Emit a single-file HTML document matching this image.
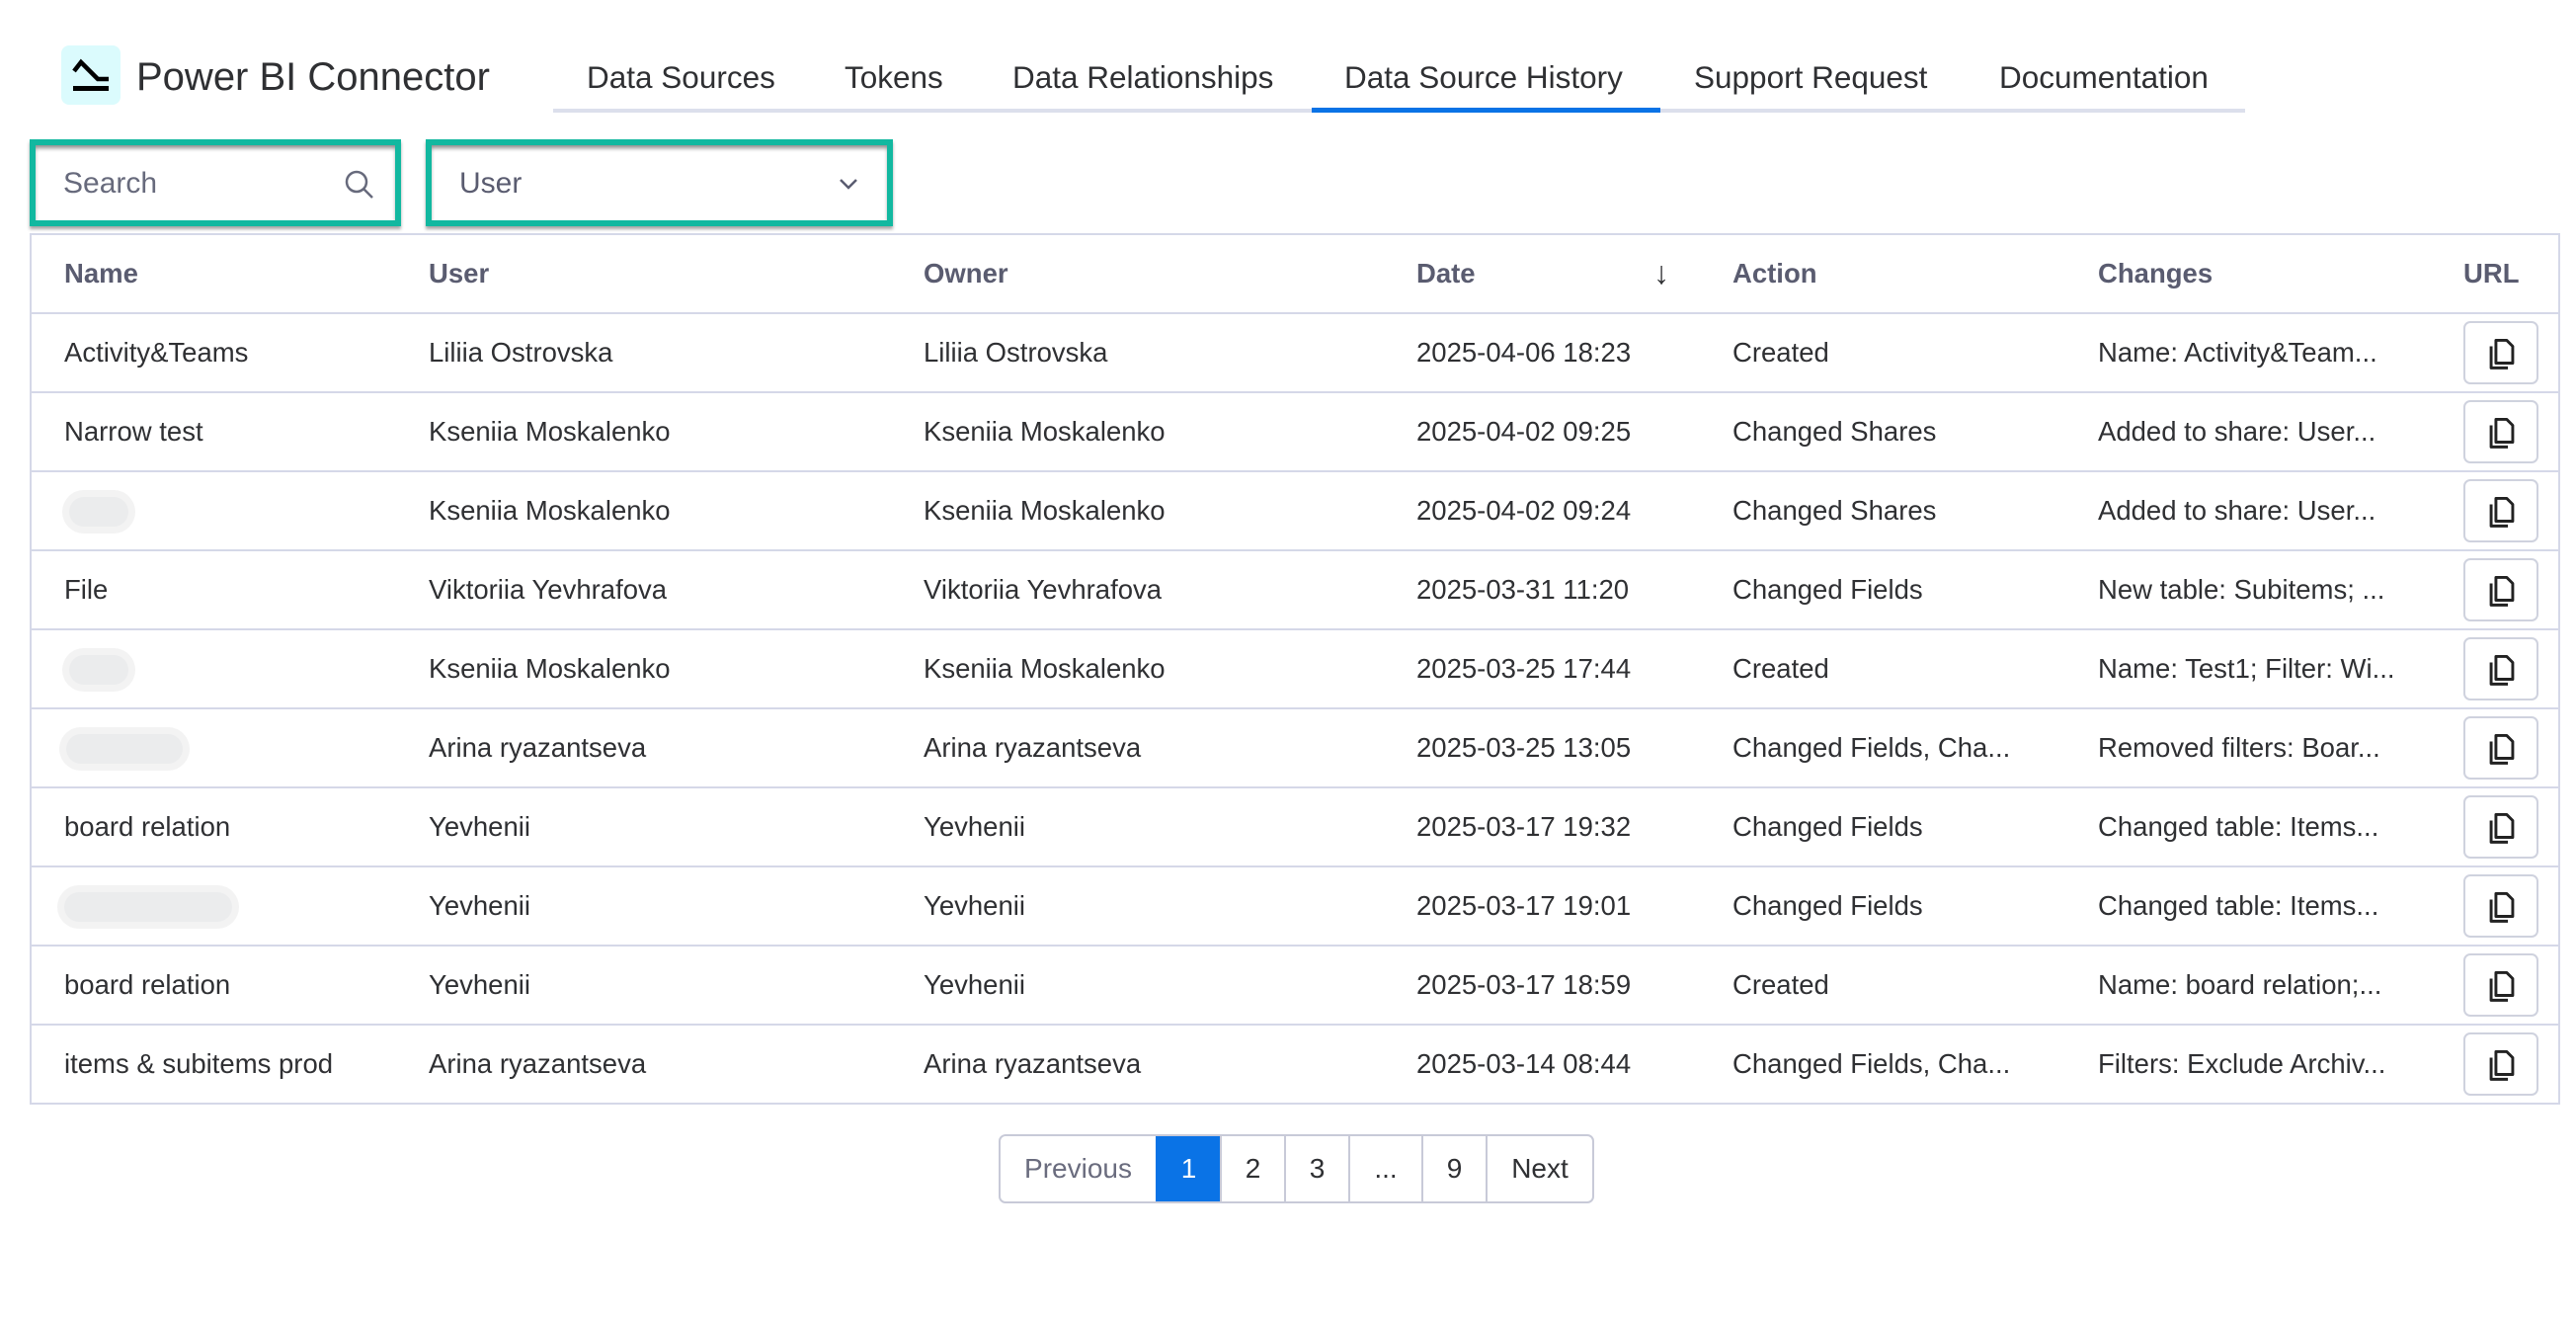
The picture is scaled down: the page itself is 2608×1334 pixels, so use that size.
<!DOCTYPE html>
<html><head><meta charset="utf-8"><style>
*{box-sizing:border-box;margin:0;padding:0}
body{width:2608px;height:1334px;background:#fff;font-family:"Liberation Sans",Arial,sans-serif;position:relative;overflow:hidden;color:#2f3033}
.abs{position:absolute}
.logo{left:62px;top:46px;width:60px;height:60px;background:#dbfbfd;border-radius:8px}
.title{left:138px;top:56px;font-size:40px;color:#2f3033;white-space:nowrap}
.tab{top:60px;font-size:31.5px;color:#2f3033;white-space:nowrap}
.tabline{left:560px;top:110px;width:1713px;height:4px;background:#dcdfec}
.tabactive{left:1328px;top:109px;width:353px;height:5px;background:#0a73e6}
.box{border:6px solid #12b8a0;box-shadow:inset 0 4px 4px -1px rgba(0,0,0,.45),0 3px 3px rgba(0,0,0,.35);background:#fff}
.ph{font-size:30px;color:#676a7c}
table{position:absolute;left:30px;top:236px;width:2562px;border-collapse:collapse;border:2px solid #d5d8e8;border-radius:6px}
td,th{height:80px;border-bottom:2px solid #d5d8e8;font-size:27.5px;text-align:left;padding:0;white-space:nowrap;vertical-align:middle}
th{color:#5a5c70;font-weight:bold;height:80px}
tr:last-child td{border-bottom:none}
.c1{padding-left:33px;width:403px}.c2{width:501px}.c3{width:499px}.c4{width:320px}.c5{width:370px}.c6{width:370px}
.cp{display:block;width:76px;height:64px;border:2px solid #cfd2de;border-radius:7px;margin-left:0;position:relative}
.cp svg{position:absolute;left:20px;top:13px}
.blur{display:inline-block;height:30px;background:#ebeced;border-radius:15px;box-shadow:0 0 0 7px #f3f3f3;vertical-align:middle}
.pag{position:absolute;left:1011px;top:1148px;height:70px;display:flex;border:2px solid #c8cad8;border-radius:7px;overflow:hidden}
.pag div{height:100%;display:flex;align-items:center;justify-content:center;font-size:28px;border-left:2px solid #c8cad8;color:#2f3033}
.pag div:first-child{border-left:none;color:#6a6c7e}
</style></head><body>
<div class="abs logo"><svg width="60" height="60" viewBox="0 0 60 60"><path d="M13 26 L20 17 L37 34 L48 34" stroke="#000" stroke-width="4.5" fill="none"/><rect x="12" y="41" width="36" height="5" fill="#000"/></svg></div>
<div class="abs title">Power BI Connector</div>
<div class="abs tabline"></div>
<div class="abs tabactive"></div>
<div class="abs tab" style="left:594px">Data Sources</div>
<div class="abs tab" style="left:855px">Tokens</div>
<div class="abs tab" style="left:1025px">Data Relationships</div>
<div class="abs tab" style="left:1361px">Data Source History</div>
<div class="abs tab" style="left:1715px">Support Request</div>
<div class="abs tab" style="left:2024px">Documentation</div>

<div class="abs box" style="left:30px;top:141px;width:376px;height:88px">
<span class="abs ph" style="left:28px;top:22px">Search</span>
<svg class="abs" style="left:312px;top:24px" width="32" height="32" viewBox="0 0 32 32"><circle cx="13" cy="13" r="10" stroke="#676a7c" stroke-width="2.5" fill="none"/><path d="M20 20 L29 29" stroke="#676a7c" stroke-width="2.5"/></svg>
</div>
<div class="abs box" style="left:431px;top:141px;width:473px;height:88px">
<span class="abs ph" style="left:28px;top:22px;color:#5a5c70">User</span>
<svg class="abs" style="left:412px;top:32px" width="20" height="14" viewBox="0 0 20 14"><path d="M2 3 L10 11 L18 3" stroke="#5a5c70" stroke-width="2.5" fill="none"/></svg>
</div>

<table>
<tr><th class="c1">Name</th><th class="c2">User</th><th class="c3">Owner</th><th class="c4">Date</th><th class="c5" style="position:relative"><span style="position:absolute;left:-80px;top:20px;font-weight:normal;color:#2f3033;font-size:32px">↓</span>Action</th><th class="c6">Changes</th><th>URL</th></tr>
<tr><td class="c1">Activity&amp;Teams</td><td>Liliia Ostrovska</td><td>Liliia Ostrovska</td><td>2025-04-06 18:23</td><td>Created</td><td>Name: Activity&amp;Team...</td><td><span class="cp"><svg width="34" height="38" viewBox="0 0 28 30"><path d="M9 3 H18 L23 8 V22 H9 Z" stroke="#222" stroke-width="2.4" fill="none" stroke-linejoin="round"/><path d="M5 8 V26 H19" stroke="#222" stroke-width="2.4" fill="none" stroke-linejoin="round"/></svg></span></td></tr>
<tr><td class="c1">Narrow test</td><td>Kseniia Moskalenko</td><td>Kseniia Moskalenko</td><td>2025-04-02 09:25</td><td>Changed Shares</td><td>Added to share: User...</td><td><span class="cp"><svg width="34" height="38" viewBox="0 0 28 30"><path d="M9 3 H18 L23 8 V22 H9 Z" stroke="#222" stroke-width="2.4" fill="none" stroke-linejoin="round"/><path d="M5 8 V26 H19" stroke="#222" stroke-width="2.4" fill="none" stroke-linejoin="round"/></svg></span></td></tr>
<tr><td class="c1"><span class="blur" style="width:60px;margin-left:5px"></span></td><td>Kseniia Moskalenko</td><td>Kseniia Moskalenko</td><td>2025-04-02 09:24</td><td>Changed Shares</td><td>Added to share: User...</td><td><span class="cp"><svg width="34" height="38" viewBox="0 0 28 30"><path d="M9 3 H18 L23 8 V22 H9 Z" stroke="#222" stroke-width="2.4" fill="none" stroke-linejoin="round"/><path d="M5 8 V26 H19" stroke="#222" stroke-width="2.4" fill="none" stroke-linejoin="round"/></svg></span></td></tr>
<tr><td class="c1">File</td><td>Viktoriia Yevhrafova</td><td>Viktoriia Yevhrafova</td><td>2025-03-31 11:20</td><td>Changed Fields</td><td>New table: Subitems; ...</td><td><span class="cp"><svg width="34" height="38" viewBox="0 0 28 30"><path d="M9 3 H18 L23 8 V22 H9 Z" stroke="#222" stroke-width="2.4" fill="none" stroke-linejoin="round"/><path d="M5 8 V26 H19" stroke="#222" stroke-width="2.4" fill="none" stroke-linejoin="round"/></svg></span></td></tr>
<tr><td class="c1"><span class="blur" style="width:60px;margin-left:5px"></span></td><td>Kseniia Moskalenko</td><td>Kseniia Moskalenko</td><td>2025-03-25 17:44</td><td>Created</td><td>Name: Test1; Filter: Wi...</td><td><span class="cp"><svg width="34" height="38" viewBox="0 0 28 30"><path d="M9 3 H18 L23 8 V22 H9 Z" stroke="#222" stroke-width="2.4" fill="none" stroke-linejoin="round"/><path d="M5 8 V26 H19" stroke="#222" stroke-width="2.4" fill="none" stroke-linejoin="round"/></svg></span></td></tr>
<tr><td class="c1"><span class="blur" style="width:118px;margin-left:2px"></span></td><td>Arina ryazantseva</td><td>Arina ryazantseva</td><td>2025-03-25 13:05</td><td>Changed Fields, Cha...</td><td>Removed filters: Boar...</td><td><span class="cp"><svg width="34" height="38" viewBox="0 0 28 30"><path d="M9 3 H18 L23 8 V22 H9 Z" stroke="#222" stroke-width="2.4" fill="none" stroke-linejoin="round"/><path d="M5 8 V26 H19" stroke="#222" stroke-width="2.4" fill="none" stroke-linejoin="round"/></svg></span></td></tr>
<tr><td class="c1">board relation</td><td>Yevhenii</td><td>Yevhenii</td><td>2025-03-17 19:32</td><td>Changed Fields</td><td>Changed table: Items...</td><td><span class="cp"><svg width="34" height="38" viewBox="0 0 28 30"><path d="M9 3 H18 L23 8 V22 H9 Z" stroke="#222" stroke-width="2.4" fill="none" stroke-linejoin="round"/><path d="M5 8 V26 H19" stroke="#222" stroke-width="2.4" fill="none" stroke-linejoin="round"/></svg></span></td></tr>
<tr><td class="c1"><span class="blur" style="width:170px;margin-left:0px"></span></td><td>Yevhenii</td><td>Yevhenii</td><td>2025-03-17 19:01</td><td>Changed Fields</td><td>Changed table: Items...</td><td><span class="cp"><svg width="34" height="38" viewBox="0 0 28 30"><path d="M9 3 H18 L23 8 V22 H9 Z" stroke="#222" stroke-width="2.4" fill="none" stroke-linejoin="round"/><path d="M5 8 V26 H19" stroke="#222" stroke-width="2.4" fill="none" stroke-linejoin="round"/></svg></span></td></tr>
<tr><td class="c1">board relation</td><td>Yevhenii</td><td>Yevhenii</td><td>2025-03-17 18:59</td><td>Created</td><td>Name: board relation;...</td><td><span class="cp"><svg width="34" height="38" viewBox="0 0 28 30"><path d="M9 3 H18 L23 8 V22 H9 Z" stroke="#222" stroke-width="2.4" fill="none" stroke-linejoin="round"/><path d="M5 8 V26 H19" stroke="#222" stroke-width="2.4" fill="none" stroke-linejoin="round"/></svg></span></td></tr>
<tr><td class="c1">items &amp; subitems prod</td><td>Arina ryazantseva</td><td>Arina ryazantseva</td><td>2025-03-14 08:44</td><td>Changed Fields, Cha...</td><td>Filters: Exclude Archiv...</td><td><span class="cp"><svg width="34" height="38" viewBox="0 0 28 30"><path d="M9 3 H18 L23 8 V22 H9 Z" stroke="#222" stroke-width="2.4" fill="none" stroke-linejoin="round"/><path d="M5 8 V26 H19" stroke="#222" stroke-width="2.4" fill="none" stroke-linejoin="round"/></svg></span></td></tr>
</table>

<div class="pag">
<div style="width:157px">Previous</div>
<div style="width:65px;background:#0a73e6;color:#fff;border-left-color:#0a73e6">1</div>
<div style="width:65px">2</div>
<div style="width:65px">3</div>
<div style="width:74px">...</div>
<div style="width:65px">9</div>
<div style="width:108px">Next</div>
</div>
</body></html>
